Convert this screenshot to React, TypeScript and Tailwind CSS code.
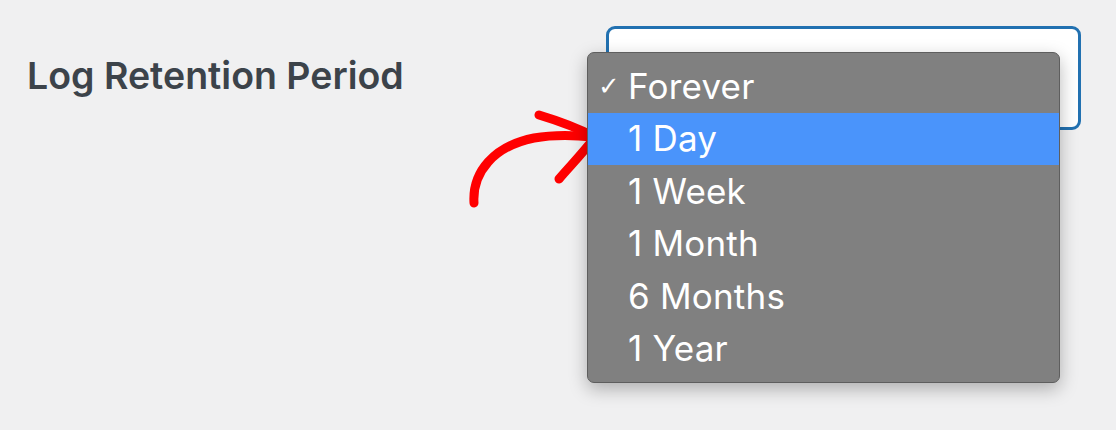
const options = ["Forever", "1 Day", "1 Week", "1 Month", "6 Months", "1 Year"];

export default function App() {
  return (
    <div className="flex h-[430px] w-[1116px] overflow-hidden bg-[#f0f0f1] font-['Inter',sans-serif]">
      <div className="w-[578px] pl-[27px] pt-[54px]">
        <h2 className="text-[37.5px] font-semibold leading-[44px] text-[#3c434a]">Log Retention Period</h2>
      </div>

      <div className="relative flex-1">
        {/* closed select box underneath */}
        <div className="ml-[28px] mt-[26px] h-[104px] w-[475px] rounded-[9px] border-[3px] border-[#2271b1] bg-white" />

        {/* arrow pointing at the option */}
        <svg className="absolute left-[-120px] top-[100px]" width="140" height="120" viewBox="0 0 140 120">
          <path
            d="M16 103 C 14 72, 36 46, 76 38 C 98 34, 116 35, 135 37"
            fill="none"
            stroke="#ff0000"
            strokeWidth="9"
            strokeLinecap="round"
          />
          <path
            d="M81 15 C 101 21, 120 28, 137 37 C 126 52, 112 66, 101 79"
            fill="none"
            stroke="#ff0000"
            strokeWidth="9"
            strokeLinecap="round"
            strokeLinejoin="round"
          />
        </svg>

        {/* open menu */}
        <div className="absolute left-[9px] top-[52px] w-[473px] rounded-[7px] border border-[#5e5e5e] bg-[#808080] py-[7px] shadow-[0_6px_18px_rgba(0,0,0,0.28)]">
          {options.map((o, i) => (
            <div
              key={o}
              className={`flex h-[52.5px] items-center text-[35px] leading-none tracking-[0.2px] text-white ${i === 1 ? "bg-[#4a94fb]" : ""}`}
            >
              <span className="w-[40px] pl-[10px] text-[26px] font-['DejaVu_Sans',sans-serif]">
                {i === 0 ? "✓" : ""}
              </span>
              <span>{o}</span>
            </div>
          ))}
        </div>
      </div>
    </div>
  );
}
